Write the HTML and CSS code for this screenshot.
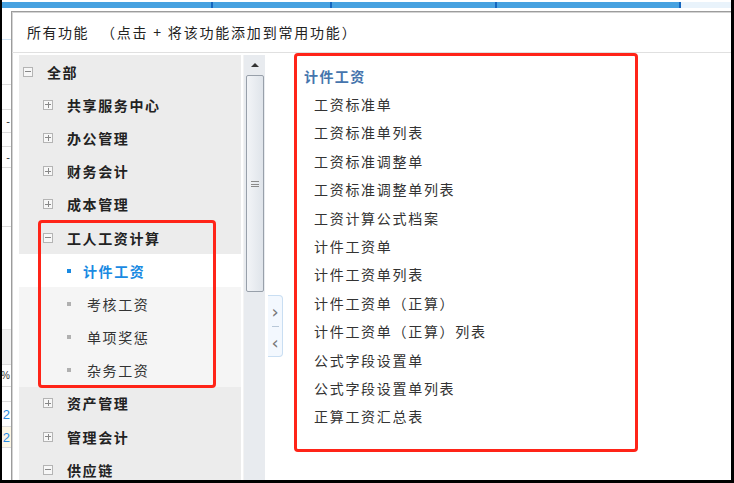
FILE: index.html
```html
<!DOCTYPE html>
<html lang="zh-CN">
<head>
  <meta charset="UTF-8" />
  <title>所有功能</title>
  <link rel="stylesheet" href="styles.css">
</head>
<body>
  <div class="screen">
    <div class="topbar">
      <span class="tab t1"></span>
      <span class="tab t2"></span>
      <span class="tab t3"></span>
      <span class="tab t4"></span>
      <span class="tab-rest"></span>
    </div>

    <div class="stage">
      <!-- page behind the dialog, only a sliver is visible -->
      <div class="behind">
        <div class="bh r1"></div>
        <div class="bh r2"></div>
        <div class="bh r3"></div>
        <div class="bh r4"><span>-</span></div>
        <div class="bh r5"></div>
        <div class="bh r6"><span>-</span></div>
        <div class="bh r7"></div>
        <div class="bh r8"></div>
        <div class="bh r9"></div>
        <div class="bh r10"><span>%</span></div>
        <div class="bh r11"></div>
        <div class="bh r12"><span class="num">2</span></div>
        <div class="bh r13"><span class="num">2</span></div>
        <div class="bh r14"></div>
      </div>

      <div class="dialog">
        <div class="dlg-title">所有功能<span class="hint">（点击 + 将该功能添加到常用功能）</span></div>

        <div class="dlg-body">
          <div class="tree">
            <div class="node lv0"><i class="box minus"></i><b>全部</b></div>
            <div class="node lv1"><i class="box plus"></i><b>共享服务中心</b></div>
            <div class="node lv1"><i class="box plus"></i><b>办公管理</b></div>
            <div class="node lv1"><i class="box plus"></i><b>财务会计</b></div>
            <div class="node lv1"><i class="box plus"></i><b>成本管理</b></div>
            <div class="node lv1"><i class="box minus"></i><b>工人工资计算</b></div>
            <div class="node lv2 active"><i class="dot"></i><b>计件工资</b></div>
            <div class="node lv2 sub"><i class="dot"></i><span>考核工资</span></div>
            <div class="node lv2 sub"><i class="dot"></i><span>单项奖惩</span></div>
            <div class="node lv2 sub"><i class="dot"></i><span>杂务工资</span></div>
            <div class="node lv1"><i class="box plus"></i><b>资产管理</b></div>
            <div class="node lv1"><i class="box plus"></i><b>管理会计</b></div>
            <div class="node lv1"><i class="box minus"></i><b>供应链</b></div>
          </div>

          <div class="vscroll">
            <div class="arrow-up"></div>
            <div class="thumb"><span class="grip"></span></div>
          </div>

          <div class="toggle-col">
            <div class="toggle">
              <span class="chev">&#8250;</span>
              <span class="sep"></span>
              <span class="chev">&#8249;</span>
            </div>
          </div>

          <div class="content">
            <h3>计件工资</h3>
            <ul class="funcs">
              <li>工资标准单</li>
              <li>工资标准单列表</li>
              <li>工资标准调整单</li>
              <li>工资标准调整单列表</li>
              <li>工资计算公式档案</li>
              <li>计件工资单</li>
              <li>计件工资单列表</li>
              <li>计件工资单（正算）</li>
              <li>计件工资单（正算）列表</li>
              <li>公式字段设置单</li>
              <li>公式字段设置单列表</li>
              <li>正算工资汇总表</li>
            </ul>
          </div>
        </div>

        <div class="mark mark-tree"></div>
        <div class="mark mark-list"></div>
      </div>
    </div>
  </div>
</body>
</html>
```

FILE: styles.css
```css
:root{
  --red:#ff2418;
  --text:#333;
  --bold:#222;
  --panel:#ececec;
  --sub:#f5f5f5;
  --blue:#1a8ae2;
  --head:#4675ad;
}
*{box-sizing:border-box}
body{
  margin:0;background:#fff;overflow:hidden;
  font-family:"Noto Sans CJK SC","Noto Sans",sans-serif;
  color:var(--text);
}
.screen{
  width:734px;height:483px;
  border-left:2px solid #000;border-right:3px solid #000;border-bottom:3px solid #000;
  display:flex;flex-direction:column;
}

/* top tab strip */
.topbar{display:flex;height:8px;padding-top:2px;flex:none}
.tab{background:#47a2e0;border-right:2px solid #1566bf;height:6px}
.t1{width:211px}
.t2{width:119px}
.t3{width:165px}
.t4{width:184px}
.tab-rest{flex:1;background:#e9f3fb}

.stage{flex:1;display:flex;min-height:0}

/* sliver of the page behind */
.behind{width:9px;flex:none;display:flex;flex-direction:column;overflow:hidden}
.bh{border-bottom:1px solid #dcdcdc;display:flex;justify-content:flex-end;align-items:center;
  font-family:"Liberation Sans",sans-serif;font-size:11px;color:#333;white-space:nowrap;padding-right:1px}
.r1{height:32px;border-color:#cfe2f3}
.r2{height:45px}
.r3{height:25px}
.r4{height:23px}
.r5{height:14px}
.r6{height:21px}
.r7{height:59px}
.r8{height:103px;border-color:#e6e6e6}
.r9{height:35px;background:#f2f2f2}
.r10{height:22px;font-size:10px}
.r11{height:15px}
.r12{height:25px}
.r13{height:21px;background:#fdf7e6}
.r14{flex:1;border:none}
.num{color:#2a8ae0;font-size:13px}

/* dialog */
.dialog{
  flex:1;position:relative;margin-top:3px;
  border-left:1px solid #9c9c9c;border-top:1px solid #9c9c9c;
  box-shadow:inset 1px 1px 0 #d4d4d4;
  display:flex;flex-direction:column;min-width:0;
}
.dlg-title{height:40px;flex:none;padding-left:15px;display:flex;align-items:center;
  font-size:14px;letter-spacing:1.5px;color:#222}
.hint{margin-left:12px;letter-spacing:1.8px}

.dlg-body{flex:1;display:flex;border-top:1px solid #e0e0e0;padding:2px 0 0 7px;min-height:0}

/* tree */
.tree{width:222px;flex:none;background:var(--panel);overflow:hidden}
.node{height:33.2px;display:flex;align-items:center;font-size:14px;letter-spacing:1.6px}
.node b{color:var(--bold);font-weight:700}
.lv0{padding-left:4px}
.lv0 .box{margin-right:14px}
.lv1{padding-left:24px}
.lv1 .box{margin-right:14px}
.lv2{padding-left:48px}
.node.active{background:#fff}
.node.active b{color:var(--blue)}
.node.active .dot{background:var(--blue);margin-right:12px}
.node.sub{background:var(--sub)}
.node.sub .dot{margin-right:16px}
.box{width:10px;height:10px;border:1px solid #b4b4b4;background:#f7f7f7;position:relative;flex:none}
.box::before{content:"";position:absolute;left:1px;right:1px;top:3.5px;height:1px;background:#888}
.plus::after{content:"";position:absolute;top:1px;bottom:1px;left:3.5px;width:1px;background:#888}
.dot{width:4px;height:4px;background:#b0b0b0;flex:none}

/* scrollbar */
.vscroll{width:22px;flex:none;margin-left:2px;background:#e8ebef;border-left:1px solid #f3f3f3;
  display:flex;flex-direction:column;align-items:center}
.arrow-up{margin-top:8px;width:0;height:0;border-left:4px solid transparent;border-right:4px solid transparent;
  border-bottom:4px solid #333}
.thumb{margin-top:8px;width:18px;height:217px;border:1px solid #98a0aa;border-radius:2px;
  background:linear-gradient(90deg,#f2f4f7,#dfe4ea);display:flex;align-items:center;justify-content:center}
.grip{width:8px;height:6px;border-top:1px solid #8a8a8a;border-bottom:1px solid #8a8a8a;position:relative}
.grip::after{content:"";position:absolute;left:0;right:0;top:2px;height:1px;background:#8a8a8a}

/* collapse toggles */
.toggle-col{width:18px;flex:none;padding-top:240px;padding-left:3px}
.toggle{width:15px;height:62px;border:1px solid #c9def2;border-left:none;border-radius:0 4px 4px 0;
  background:#f3f8fe;display:flex;flex-direction:column;align-items:center;justify-content:center;gap:2px}
.chev{font-family:"DejaVu Sans",sans-serif;font-size:18px;line-height:14px;color:#777;margin-top:2px}
.sep{width:7px;height:1px;background:#b8c8d8;margin:5px 0}

/* function list */
.content{flex:1;padding:9px 0 0 21px}
.content h3{margin:0;height:24px;line-height:24px;font-size:14px;color:var(--head);letter-spacing:1.4px;font-weight:700}
.funcs{list-style:none;margin:2px 0 0;padding:0 0 0 10px}
.funcs li{height:28.4px;line-height:28.4px;font-size:14px;letter-spacing:1.7px;color:var(--text)}

/* red annotation frames */
.mark{position:absolute;border:3px solid var(--red);border-radius:4px;pointer-events:none}
.mark-tree{left:26px;top:208px;width:178px;height:168px}
.mark-list{left:282px;top:41px;width:344px;height:399px}
```
